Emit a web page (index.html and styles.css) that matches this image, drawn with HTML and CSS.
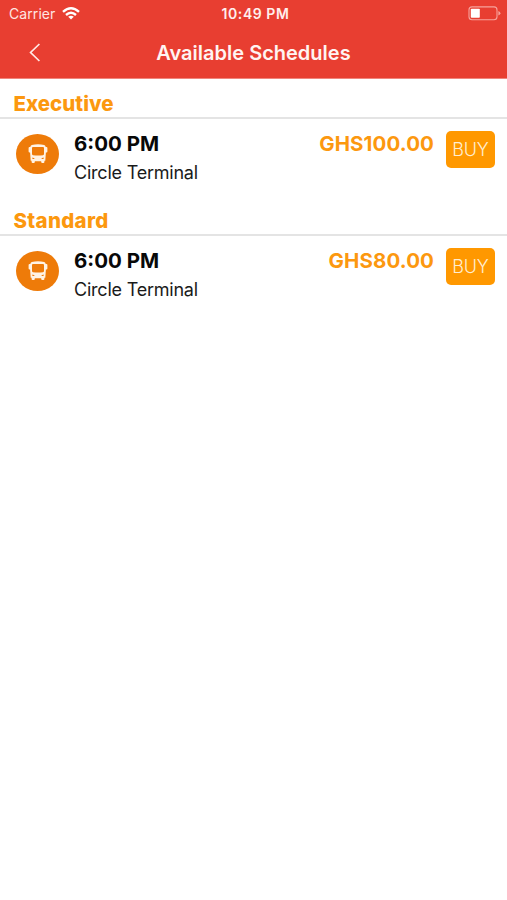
FILE: index.html
```html
<!DOCTYPE html>
<html lang="en">
<head>
<meta charset="utf-8">
<title>Available Schedules</title>
<link rel="stylesheet" href="styles.css">
</head>
<body>
<svg class="defs" width="0" height="0" aria-hidden="true">
  <symbol id="bus" viewBox="0 0 20 20">
    <path fill="currentColor" fill-rule="evenodd" d="M3.8 1Q10-.4 16.2 1Q17.5 1.4 17.7 3H18.4Q19.4 3 19.4 4V7.4Q19.4 8.4 18.4 8.4H17.9L17.3 16.8H16.4V18Q16.4 19 15.4 19H14.2Q13.2 19 13.2 18V17.2H6.8V18Q6.8 19 5.8 19H4.6Q3.6 19 3.6 18V16.8H2.7L2.1 8.4H1.6Q.6 8.4.6 7.4V4Q.6 3 1.6 3H2.3Q2.5 1.4 3.8 1ZM5 3Q4 3 4 4V10Q4 11 5 11.2Q10 12 15 11.2Q16 11 16 10V4Q16 3 15 3ZM4.4 13.6V15H6.8Q6.2 13.8 4.4 13.6ZM15.6 13.6Q13.8 13.8 13.2 15H15.6Z"/>
  </symbol>
</svg>
<header class="header">
  <div class="status">
    <div class="carrier"><span class="carrier-name">Carrier</span>
      <svg class="wifi" width="18" height="13" viewBox="0 0 18 13"><g fill="none" stroke="#fff" stroke-width="2.4"><path d="M1 4.8Q9-2.2 17 4.8"/><path d="M4 8Q9 3.6 14 8"/></g><path fill="#fff" d="M6.2 9.8Q9 7.6 11.8 9.8L9 12.6Z"/></svg>
    </div>
    <span class="clock">10:49 PM</span>
    <svg class="battery" width="33" height="15" viewBox="0 0 33 15"><rect x="1" y=".9" width="28" height="12.8" rx="3" fill="none" stroke="#f6a39c" stroke-width="1.1"/><rect x="2.8" y="2.8" width="9" height="9" rx=".8" fill="#fff"/><path fill="#f6a39c" d="M30.4 5Q32.4 5.8 32.4 7.3T30.4 9.6Z"/></svg>
  </div>
  <div class="navbar">
    <svg class="back" width="12" height="19" viewBox="0 0 12 19"><path d="M10.4 1L1.6 9.5L10.4 18" fill="none" stroke="#ffe9e6" stroke-width="1.7"/></svg>
    <h1 class="title">Available Schedules</h1>
  </div>
</header>
<main>
  <section class="group">
    <h2 class="group-name">Executive</h2>
    <div class="trip">
      <div class="badge"><svg width="20" height="20"><use href="#bus"/></svg></div>
      <div class="info"><div class="time">6:00 PM</div><div class="place">Circle Terminal</div></div>
      <div class="price">GHS100.00</div>
      <button class="buy">BUY</button>
    </div>
  </section>
  <section class="group">
    <h2 class="group-name standard">Standard</h2>
    <div class="trip">
      <div class="badge"><svg width="20" height="20"><use href="#bus"/></svg></div>
      <div class="info"><div class="time">6:00 PM</div><div class="place">Circle Terminal</div></div>
      <div class="price">GHS80.00</div>
      <button class="buy">BUY</button>
    </div>
  </section>
</main>
</body>
</html>
```
FILE: styles.css
```css
* { box-sizing: border-box; }
body { margin: 0; min-height: 900px; background: #fff; color: #080808; font-family: Inter, "Liberation Sans", sans-serif; }
.defs { display: block; }
.header { height: 79px; background: #e83e31; color: #fff; border-bottom: 1px solid #f0857c; }
.status { height: 27px; display: grid; grid-template-columns: 1fr auto 1fr; align-items: center; padding: 0 6px 0 9px; }
.carrier { display: flex; align-items: center; gap: 7px; }
.carrier-name { font-size: 14px; line-height: 27px; letter-spacing: .08px; color: #ffe5e2; }
.clock { margin-left: 1px; font-size: 14px; font-weight: 600; line-height: 27px; letter-spacing: .55px; color: #ffefed; }
.battery { justify-self: end; }
.navbar { height: 51px; display: grid; grid-template-columns: 60px 1fr 60px; align-items: center; }
.back { margin-left: 29px; }
.title { margin: 0; text-align: center; font-size: 20px; font-weight: 600; line-height: 26px; color: #fff4f2; white-space: nowrap; }
.group { height: 117px; }
.group-name { margin: 0; height: 40px; padding: 12px 13.5px 0; font-size: 20.5px; font-weight: 800; line-height: 26px; color: #fc980f; border-bottom: 2px solid #e4e4e4; }
.standard { letter-spacing: .3px; }
.trip { display: flex; align-items: flex-start; padding: 12px 12px 0 16px; }
.badge { width: 43px; height: 40px; margin-top: 3px; border-radius: 50%; background: #ee7b09; color: #fff3e4; display: flex; align-items: center; justify-content: center; }
.info { flex: 1; margin-left: 15px; }
.time { font-size: 20.5px; font-weight: 700; line-height: 26px; }
.place { margin-top: 4px; font-size: 18px; line-height: 24px; letter-spacing: -.22px; color: #1a1a1a; }
.price { font-size: 20.5px; font-weight: 650; line-height: 26px; letter-spacing: .1px; color: #fc980f; }
.buy { width: 49px; height: 37px; margin-left: 12px; padding: 0; border: 0; border-radius: 5px; background: #ff9800; color: #ffedd0; font: 350 18px/37px Inter, "Liberation Sans", sans-serif; letter-spacing: -.2px; }
```
